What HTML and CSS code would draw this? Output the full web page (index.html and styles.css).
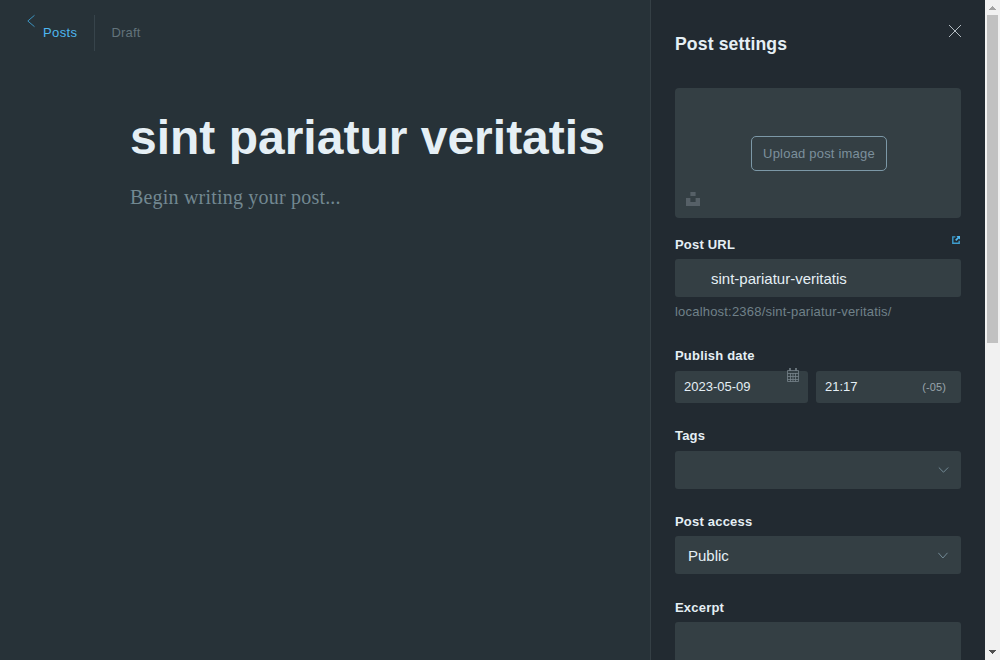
FILE: index.html
```html
<!DOCTYPE html>
<html lang="en">
<head>
<meta charset="utf-8">
<title>Post settings</title>
<link rel="stylesheet" href="styles.css">
</head>
<body>
<div class="app">
  <main class="editor">
    <header class="topbar">
      <a class="back">
        <svg class="back-icon" width="10" height="14" viewBox="0 0 10 14"><path d="M8.5 1.3 1.8 7l6.7 5.7"/></svg>
        <span class="posts">Posts</span>
      </a>
      <span class="status">Draft</span>
    </header>
    <h1 class="title">sint pariatur veritatis</h1>
    <p class="body-text">Begin writing your post...</p>
  </main>
  <aside class="settings">
    <div class="settings-head">
      <h2 class="settings-title">Post settings</h2>
      <svg class="close" width="14" height="14" viewBox="0 0 14 14"><path d="M1 1l12 12M13 1 1 13"/></svg>
    </div>
    <div class="uploader">
      <button class="upload-btn">Upload post image</button>
      <svg class="unsplash" width="14" height="14" viewBox="0 0 14 14"><path d="M4.4 0h5.2v4H4.4zM0 6h4.4v4h5.2V6H14v8H0z"/></svg>
    </div>
    <section class="group url-group">
      <div class="label-row">
        <label class="label">Post URL</label>
        <svg class="external" width="8" height="8" viewBox="0 0 8 8"><path class="frame" d="M3.4.9H.8v6.3h6.4V4.7"/><path class="arrow" d="M4.4 0H8v3.6L6.8 2.5 4.3 5 3.1 3.8l2.5-2.5z"/></svg>
      </div>
      <div class="field url-field">sint-pariatur-veritatis</div>
      <p class="hint">localhost:2368/sint-pariatur-veritatis/</p>
    </section>
    <section class="group date-group">
      <label class="label">Publish date</label>
      <div class="date-row">
        <div class="field date-field">2023-05-09
          <svg class="calendar" width="12" height="14" viewBox="0 0 12 14"><path d="M.5 2.5h11v11H.5zM.5 5.5h11M.5 8.5h11M.5 11.5h11M3.5 5v8.500M6 5v8.500M8.500 5v8.500"/><path class="rings" d="M3 0v3M9 0v3"/></svg>
        </div>
        <div class="field time-field"><span>21:17</span><span class="zone">(-05)</span></div>
      </div>
    </section>
    <section class="group tags-group">
      <label class="label">Tags</label>
      <div class="field select"><span></span><svg class="chevron" width="11" height="8" viewBox="0 0 11 8"><path d="M.8 1.500 5.500 6.200l4.700-4.700"/></svg></div>
    </section>
    <section class="group access-group">
      <label class="label">Post access</label>
      <div class="field select access"><span>Public</span><svg class="chevron" width="11" height="8" viewBox="0 0 11 8"><path d="M.3.8 4.900 6l4.600-5.200"/></svg></div>
    </section>
    <section class="group excerpt-group">
      <label class="label">Excerpt</label>
      <div class="field excerpt"></div>
    </section>
  </aside>
  <div class="scrollbar">
    <svg class="scroll-arrow up" width="15" height="15" viewBox="0 0 15 15" shape-rendering="crispEdges"><path d="M7 6h1v1h1v1h1v1h1v1H4V9h1V8h1V7h1z"/></svg>
    <div class="thumb"></div>
    <svg class="scroll-arrow down" width="15" height="15" viewBox="0 0 15 15" shape-rendering="crispEdges"><path d="M4 5h7v1h-1v1H9v1H8v1H7V8H6V7H5V6H4z"/></svg>
  </div>
</div>
</body>
</html>
```
FILE: styles.css
```css
* { box-sizing: border-box; }
body {
  margin: 0;
  height: 660px;
  overflow: hidden;
  font-family: "Liberation Sans", Arial, sans-serif;
  font-size: 13px;
  color: #e5eff5;
}
h1, h2, p { margin: 0; }
svg { display: block; fill: none; }
.app { display: flex; height: 660px; overflow: hidden; }

.editor { width: 650px; background: #273238; }
.topbar {
  display: flex;
  height: 51px;
  padding: 15px 0 0 26px;
  letter-spacing: 0.2px;
}
.back { display: flex; width: 69px; height: 36px; border-right: 1px solid #37444b; color: #4eb7f0; }
.back-icon { margin-top: -1px; stroke: #3c93bf; }
.posts { padding: 10px 0 0 7px; line-height: 16px; letter-spacing: 0.4px; }
.status { padding: 10px 0 0 16.500px; line-height: 16px; color: #62737b; }
.title {
  margin: 59px 0 0 130px;
  font-size: 48px;
  line-height: 55px;
  font-weight: 700;
  white-space: nowrap;
}
.body-text {
  margin: 19px 0 0 130px;
  font-family: "Liberation Serif", Georgia, serif;
  font-size: 20px;
  line-height: 26px;
  letter-spacing: 0.2px;
  color: #728891;
}

.settings {
  width: 335px;
  height: 660px;
  padding: 0 24px;
  overflow: hidden;
  border-left: 1px solid #353f45;
  background: #222a31;
}
.settings-head { display: flex; justify-content: space-between; height: 88px; }
.settings-title { padding-top: 33px; font-size: 17.600px; line-height: 22px; letter-spacing: 0.13px; }
.close { margin: 24px -1px 0 0; stroke: #b3bcc2; }
.uploader {
  position: relative;
  display: flex;
  justify-content: center;
  height: 130px;
  padding: 48px 0 0 2px;
  border-radius: 4px;
  background: #343f44;
}
.upload-btn {
  width: 136px;
  height: 35px;
  padding: 0;
  border: 1px solid #7c98a7;
  border-radius: 5px;
  background: none;
  font: 13px "Liberation Sans", Arial, sans-serif;
  letter-spacing: 0.2px;
  white-space: nowrap;
  color: #7c909c;
}
.unsplash { position: absolute; left: 11px; bottom: 12px; fill: #566067; }

.label { display: block; font-weight: 700; line-height: 16px; letter-spacing: 0.2px; }
.label-row { display: flex; justify-content: space-between; }
.label-row .label { padding-top: 1px; }
.external { margin: 0 1px 0 0; }
.frame { stroke: #3e9dce; stroke-width: 1.4; }
.arrow { fill: #4eb7f0; }
.field {
  display: flex;
  align-items: center;
  border-radius: 3px;
  background: #343f44;
}
.url-group { height: 112px; padding-top: 18px; }
.url-field { height: 38px; margin-top: 6px; padding: 1px 36px 0; font-size: 15px; }
.hint { margin-top: 7px; line-height: 16px; letter-spacing: 0.2px; color: #708189; }
.date-group { height: 80px; padding-top: 18px; }
.date-row { display: grid; grid-template-columns: 133px 145px; gap: 8px; margin-top: 7px; }
.date-field, .time-field { position: relative; height: 32px; padding: 0 9px 1px; }
.calendar { position: absolute; right: 9px; top: -3px; stroke: #77838a; stroke-width: 0.8; }
.rings { stroke-width: 1.6; }
.time-field { justify-content: space-between; padding-right: 15px; }
.zone { padding-top: 1px; font-size: 11px; letter-spacing: 0.1px; color: #99a4ab; }
.tags-group { height: 86px; padding-top: 18px; }
.select { height: 38px; margin-top: 7px; padding: 0 12px 0 13px; justify-content: space-between; font-size: 15px; }
.chevron { stroke: #738a96; }
.access-group { height: 86px; padding-top: 18px; }
.access { margin-top: 6px; padding-top: 1px; }
.excerpt-group { padding-top: 18px; }
.excerpt { height: 90px; margin-top: 6px; }

.scrollbar { display: flex; flex-direction: column; width: 15px; background: #f1f1f1; }
.thumb { width: 11px; height: 328px; margin-left: 2px; background: #c1c1c1; }
.up { fill: #a3a3a3; }
.down { margin-top: auto; fill: #505050; }
```
